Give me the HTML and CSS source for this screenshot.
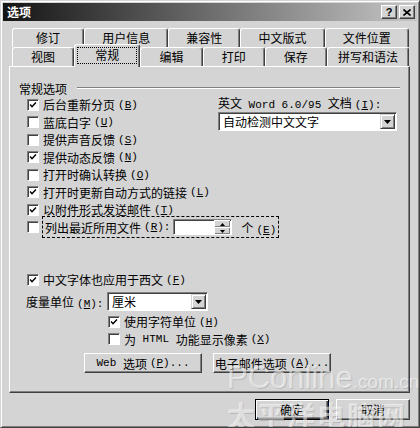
FILE: index.html
```html
<!DOCTYPE html>
<html lang="zh-CN">
<head>
    <meta charset="utf-8">
    <title>选项</title>
    <link rel="stylesheet" href="styles.css">
</head>
<body>
    <div class="window">
        <div class="titlebar">
            <span class="title">选项</span>
            <div class="caption-btns">
                <span class="cbtn help">?</span>
                <span class="cbtn">
                    <svg width="8" height="7" viewBox="0 0 8 7"><path d="M0.5 0.5 L7.5 6.5 M7.5 0.5 L0.5 6.5" stroke="#000" stroke-width="1.6"/></svg>
                </span>
            </div>
        </div>

        <div class="dialog">
            <div class="tabs">
                <div class="tab-row">
                    <div class="tab narrow">修订</div>
                    <div class="tab">用户信息</div>
                    <div class="tab narrow">兼容性</div>
                    <div class="tab">中文版式</div>
                    <div class="tab">文件位置</div>
                </div>
                <div class="tab-row front">
                    <div class="tab">视图</div>
                    <div class="tab active"><span class="focus">常规</span></div>
                    <div class="tab">编辑</div>
                    <div class="tab">打印</div>
                    <div class="tab">保存</div>
                    <div class="tab wide">拼写和语法</div>
                </div>
            </div>

            <div class="panel">
                <div class="group-title">
                    <span>常规选项</span>
                    <span class="groove"></span>
                </div>

                <div class="options">
                    <div class="col-left">
                        <div class="row"><span class="cb"><svg viewBox="0 0 12 12"><path d="M2.5 5.5 L4.8 8 L9.5 3" fill="none" stroke="#000" stroke-width="1.8"/></svg></span>后台重新分页<span class="k">(<u>B</u>)</span></div>
                        <div class="row"><span class="cb"></span>蓝底白字<span class="k">(<u>U</u>)</span></div>
                        <div class="row"><span class="cb"></span>提供声音反馈<span class="k">(<u>S</u>)</span></div>
                        <div class="row"><span class="cb"><svg viewBox="0 0 12 12"><path d="M2.5 5.5 L4.8 8 L9.5 3" fill="none" stroke="#000" stroke-width="1.8"/></svg></span>提供动态反馈<span class="k">(<u>N</u>)</span></div>
                        <div class="row"><span class="cb"></span>打开时确认转换<span class="k">(<u>O</u>)</span></div>
                        <div class="row"><span class="cb"><svg viewBox="0 0 12 12"><path d="M2.5 5.5 L4.8 8 L9.5 3" fill="none" stroke="#000" stroke-width="1.8"/></svg></span>打开时更新自动方式的链接<span class="k">(<u>L</u>)</span></div>
                        <div class="row"><span class="cb"><svg viewBox="0 0 12 12"><path d="M2.5 5.5 L4.8 8 L9.5 3" fill="none" stroke="#000" stroke-width="1.8"/></svg></span>以附件形式发送邮件<span class="k">(<u>T</u>)</span></div>
                        <div class="row recent">
                            <span class="cb"></span>
                            <span class="focus-rect">
                                列出最近所用文件<span class="k">(<u>R</u>):</span>
                                <span class="spin">
                                    <span class="spin-btns">
                                        <span class="spin-btn"><svg width="5" height="3" viewBox="0 0 5 3"><polygon points="2.5,0 5,3 0,3" fill="#000"/></svg></span>
                                        <span class="spin-btn"><svg width="5" height="3" viewBox="0 0 5 3"><polygon points="0,0 5,0 2.5,3" fill="#000"/></svg></span>
                                    </span>
                                </span>
                                <span class="unit">个<span class="k">(<u>E</u>)</span></span>
                            </span>
                        </div>
                    </div>
                    <div class="col-right">
                        <div class="label">英文<span class="latin"> Word 6.0/95 </span>文档<span class="k">(<u>I</u>):</span></div>
                        <div class="select">
                            <span class="select-text">自动检测中文文字</span>
                            <span class="arrow-btn"><svg width="7" height="4" viewBox="0 0 7 4"><polygon points="0,0 7,0 3.5,4" fill="#000"/></svg></span>
                        </div>
                    </div>
                </div>

                <div class="row cjk-row"><span class="cb"><svg viewBox="0 0 12 12"><path d="M2.5 5.5 L4.8 8 L9.5 3" fill="none" stroke="#000" stroke-width="1.8"/></svg></span>中文字体也应用于西文<span class="k">(<u>F</u>)</span></div>

                <div class="unit-row">
                    <span>度量单位<span class="k">(<u>M</u>):</span></span>
                    <div class="select">
                        <span class="select-text">厘米</span>
                        <span class="arrow-btn"><svg width="7" height="4" viewBox="0 0 7 4"><polygon points="0,0 7,0 3.5,4" fill="#000"/></svg></span>
                    </div>
                </div>
                <div class="row sub-row"><span class="cb"><svg viewBox="0 0 12 12"><path d="M2.5 5.5 L4.8 8 L9.5 3" fill="none" stroke="#000" stroke-width="1.8"/></svg></span>使用字符单位<span class="k">(<u>H</u>)</span></div>
                <div class="row sub-row"><span class="cb"></span>为<span class="latin"> HTML </span>功能显示像素<span class="k">(<u>X</u>)</span></div>

                <div class="panel-buttons">
                    <span class="btn wide-btn"><span class="latin">Web </span>选项<span class="k">(<u>P</u>)...</span></span>
                    <span class="btn wide-btn">电子邮件选项<span class="k">(<u>A</u>)...</span></span>
                </div>
            </div>

            <div class="footer">
                <span class="btn default">确定</span>
                <span class="btn">取消</span>
            </div>
        </div>

        <div class="watermark">
            <div class="wm-site"><span class="wm-big">PConline</span><span class="wm-small">.com.cn</span></div>
            <div class="wm-name">太平洋电脑网</div>
        </div>
    </div>
</body>
</html>
```

FILE: styles.css
```css
body {
    margin: 0;
    padding: 0;
    background-color: #d4d4d4;
    font-family: "Noto Sans CJK SC", sans-serif;
    font-size: 12px;
    color: #000;
}

.window {
    position: relative;
    width: 420px;
    height: 428px;
    box-sizing: border-box;
    display: flex;
    flex-direction: column;
    padding: 2px;
    background-color: #d4d4d4;
    border: 1px solid;
    border-color: #d4d4d4 #404040 #404040 #d4d4d4;
    box-shadow: inset 1px 1px #fff, inset -1px -1px #808080;
    overflow: hidden;
}

/* title bar */
.titlebar {
    height: 18px;
    display: flex;
    align-items: center;
    justify-content: space-between;
    padding: 0 2px;
    background: linear-gradient(to right, #141414, #c6c6c6);
}

.title {
    color: #fff;
    font-weight: bold;
    line-height: 18px;
    padding-left: 2px;
}

.caption-btns {
    display: flex;
    gap: 2px;
}

.cbtn {
    width: 16px;
    height: 14px;
    box-sizing: border-box;
    display: flex;
    align-items: center;
    justify-content: center;
    background-color: #d4d4d4;
    border: 1px solid;
    border-color: #fff #404040 #404040 #fff;
    box-shadow: inset -1px -1px #808080;
}

.cbtn.help {
    font-family: "Liberation Sans", sans-serif;
    font-weight: bold;
    font-size: 11px;
    line-height: 12px;
}

/* dialog body */
.dialog {
    flex: 1;
    display: flex;
    flex-direction: column;
    padding: 7px 7px 0 6px;
}

.tabs {
    margin: 0 1px 0 3px;
}

.tab-row {
    display: flex;
    height: 19px;
}

.tab-row.front {
    align-items: flex-end;
}

.tab {
    flex: 1 1 0;
    height: 19px;
    box-sizing: border-box;
    text-align: center;
    line-height: 18px;
    background-color: #d4d4d4;
    border: 1px solid;
    border-color: #fff #404040 transparent #fff;
    border-bottom: none;
    border-radius: 3px 3px 0 0;
    box-shadow: inset -1px 0 #808080;
    white-space: nowrap;
}

.tab.narrow {
    flex-grow: 0.85;
}

.tab.wide {
    flex-grow: 1.33;
}

.tab.active {
    position: relative;
    z-index: 2;
    height: 23px;
    margin-bottom: -1px;
    padding: 2px 2px 0;
}

.tab.active .focus {
    display: block;
    height: 15px;
    line-height: 14px;
    border: 1px dotted #000;
}

.panel {
    flex: 1;
    display: flex;
    flex-direction: column;
    border: 1px solid;
    border-color: #fff #404040 #404040 #fff;
    box-shadow: inset -1px -1px #808080;
}

.group-title {
    display: flex;
    align-items: center;
    height: 16px;
    margin: 13px 9px 0 9px;
}

.groove {
    flex: 1;
    margin-left: 10px;
    border-top: 1px solid #808080;
    border-bottom: 1px solid #fff;
}

.options {
    display: grid;
    grid-template-columns: 208px 1fr;
}

.col-left {
    padding-left: 17px;
}

.col-right {
    padding-right: 12px;
}

.row {
    display: flex;
    align-items: center;
    height: 17.5px;
    white-space: nowrap;
}

.cb {
    flex: none;
    width: 12px;
    height: 12px;
    box-sizing: border-box;
    margin-right: 4px;
    background-color: #fff;
    border: 1px solid;
    border-color: #808080 #fff #fff #808080;
    box-shadow: inset 1px 1px #404040;
}

.cb svg {
    display: block;
    width: 10px;
    height: 10px;
}

.k {
    font-family: "Liberation Mono", monospace;
    font-size: 11px;
    margin-left: 3px;
}

.latin {
    font-family: "Liberation Mono", monospace;
    font-size: 11px;
    white-space: pre;
}

.row.recent {
    height: 22px;
    margin-top: -2.5px;
}

.focus-rect {
    display: flex;
    align-items: center;
    height: 22px;
    box-sizing: border-box;
    margin-left: -1px;
    padding: 0 2px 0 2px;
    border: 1px dashed #000;
}

.spin {
    display: flex;
    justify-content: flex-end;
    align-items: center;
    width: 59px;
    height: 16px;
    box-sizing: border-box;
    margin-left: 3px;
    padding-right: 1px;
    background-color: #fff;
    border: 1px solid;
    border-color: #808080 #fff #fff #808080;
    box-shadow: inset 1px 1px #404040;
}

.spin-btns {
    display: flex;
    flex-direction: column;
}

.spin-btn {
    width: 15px;
    height: 6px;
    display: flex;
    align-items: center;
    justify-content: center;
    background-color: #d4d4d4;
    border-top: 1px solid #fff;
    border-left: 1px solid #fff;
    box-shadow: inset -1px -1px #808080;
}

.unit {
    margin-left: 9px;
}

.label {
    line-height: 14px;
    white-space: nowrap;
}

.select {
    display: flex;
    align-items: center;
    height: 19px;
    box-sizing: border-box;
    padding: 1px;
    background-color: #fff;
    border: 1px solid;
    border-color: #808080 #fff #fff #808080;
    box-shadow: inset 1px 1px #404040;
}

.select-text {
    flex: 1;
    padding-left: 3px;
    line-height: 15px;
}

.arrow-btn {
    width: 15px;
    height: 15px;
    box-sizing: border-box;
    display: flex;
    align-items: center;
    justify-content: center;
    background-color: #d4d4d4;
    border: 1px solid;
    border-color: #d4d4d4 #404040 #404040 #d4d4d4;
    box-shadow: inset 1px 1px #fff, inset -1px -1px #808080;
}

.cjk-row {
    margin-top: 33px;
    padding-left: 17px;
}

.unit-row {
    display: grid;
    grid-template-columns: 81px 101px;
    align-items: center;
    margin-top: 3.5px;
    padding-left: 16px;
}

.sub-row {
    padding-left: 98px;
}

.unit-row + .sub-row {
    margin-top: 2px;
}

.panel-buttons {
    display: flex;
    gap: 11px;
    margin-top: 5px;
    padding-left: 74px;
}

.btn {
    height: 20px;
    box-sizing: border-box;
    display: flex;
    align-items: center;
    justify-content: center;
    background-color: #d4d4d4;
    border: 1px solid;
    border-color: #fff #404040 #404040 #fff;
    box-shadow: inset -1px -1px #808080;
    white-space: nowrap;
}

.wide-btn {
    width: 118px;
}

.footer {
    display: flex;
    justify-content: flex-end;
    gap: 7px;
    padding: 6px 0 5px;
}

.footer .btn {
    width: 74px;
    height: 21px;
}

.btn.default {
    border: 1px solid #000;
    box-shadow: inset 1px 1px #fff, inset -1px -1px #404040, inset -2px -2px #808080;
}

/* site watermark over the screenshot */
.watermark {
    position: absolute;
    left: 226px;
    top: 360px;
    width: 190px;
    color: rgba(255, 255, 255, 0.55);
    text-shadow: 1px 1px 0 rgba(0, 0, 0, 0.12);
    pointer-events: none;
}

.wm-site {
    font-family: "Liberation Sans", sans-serif;
    white-space: nowrap;
    line-height: 34px;
}

.wm-big {
    font-size: 31px;
}

.wm-small {
    font-size: 19px;
}

.wm-name {
    font-family: "Noto Sans CJK SC", sans-serif;
    font-weight: bold;
    font-size: 28px;
    letter-spacing: 2px;
    line-height: 28px;
}
```
